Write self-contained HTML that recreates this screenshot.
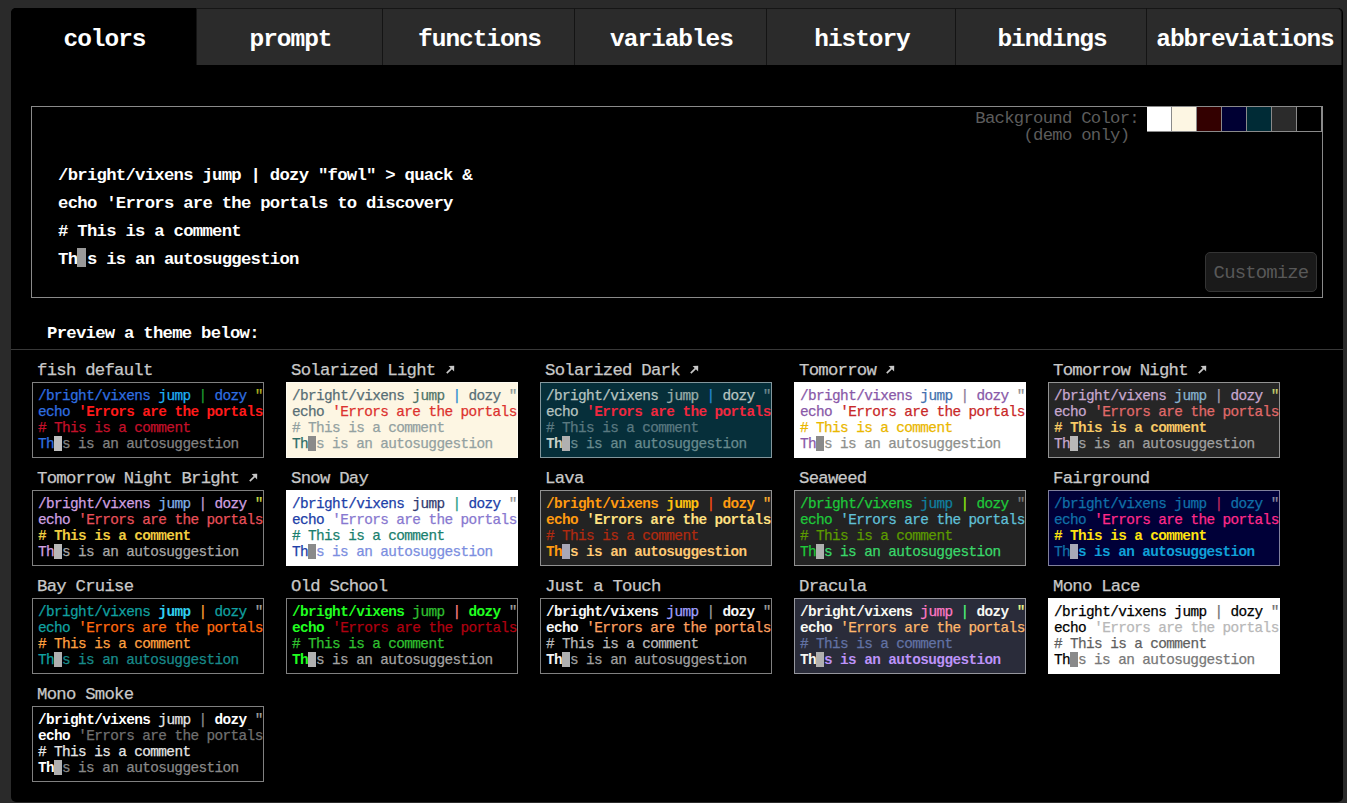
<!DOCTYPE html>
<html><head><meta charset="utf-8"><style>
html,body{margin:0;padding:0;width:1347px;height:803px;overflow:hidden;background:#2a2a2a;}
body{font-family:"Liberation Mono",monospace;color:#fff;position:relative;}
.panel{position:absolute;left:11px;top:8px;width:1332px;height:794px;background:#000;border-radius:5px;}
.tab{position:absolute;top:8px;height:57px;box-sizing:border-box;background:#2b2b2b;border-left:1px solid #141414;border-top:1px solid #161616;
  font-size:24.48px;letter-spacing:-1.043px;font-weight:bold;line-height:57px;text-align:center;color:#fff;padding-top:2px;padding-left:2px;}
.tab.sel{background:#000;border-left:none;border-top:none;padding-top:3px;padding-left:2px;border-top-left-radius:5px;}
.tab.last{border-top-right-radius:5px;border-right:1px solid #141414;}
.demo{position:absolute;left:31px;top:106px;width:1292px;height:192px;box-sizing:border-box;border:1px solid #8a8a8a;}
.dline{position:absolute;left:58px;font-size:17.28px;letter-spacing:-0.736px;font-weight:bold;line-height:16px;white-space:pre;color:#fff;}
.dcur{position:absolute;left:77px;top:248px;width:9px;height:19px;background:#999;}
.bglabel{position:absolute;right:208px;top:110px;font-size:17.28px;letter-spacing:-0.736px;line-height:17px;color:#5c5c5c;text-align:right;white-space:pre;}
.sw{position:absolute;top:106px;width:25px;height:26px;box-sizing:border-box;border:1px solid #8a8a8a;border-left:none;}
.btn{position:absolute;left:1205px;top:252px;width:112px;height:40px;box-sizing:border-box;border:1px solid #343434;border-radius:5px;background:#1a1a1a;
  color:#585858;font-size:18.90px;letter-spacing:-0.805px;line-height:40px;text-align:center;}
.preview{position:absolute;left:47px;top:326px;font-size:17.28px;letter-spacing:-0.736px;font-weight:bold;line-height:16px;color:#fff;white-space:pre;}
.hr{position:absolute;left:11px;top:349px;width:1332px;height:1px;background:#383838;}
.tname{-webkit-text-stroke:0.25px currentColor;position:absolute;font-size:17.28px;letter-spacing:-0.736px;line-height:16px;color:#c8c8c8;white-space:pre;}
.arr{position:absolute;}
.tbox{position:absolute;width:232px;height:76px;box-sizing:border-box;border:1px solid rgba(255,255,255,0.5);padding:5px 0 0 5px;
  font-size:14.40px;letter-spacing:-0.613px;line-height:16px;white-space:pre;overflow:hidden;}
.cur{display:inline-block;width:8px;height:15px;vertical-align:top;}
</style></head><body>
<div class="panel"></div>
<div class="tab sel" style="left:11px;width:185px">colors</div><div class="tab" style="left:196px;width:186px">prompt</div><div class="tab" style="left:382px;width:192px">functions</div><div class="tab" style="left:574px;width:192px">variables</div><div class="tab" style="left:766px;width:189px">history</div><div class="tab" style="left:955px;width:191px">bindings</div><div class="tab last" style="left:1146px;width:196px">abbreviations</div>
<div class="demo"></div>
<div class="dline" style="top:168px">/bright/vixens jump | dozy "fowl" &gt; quack &amp;</div>
<div class="dline" style="top:196px">echo 'Errors are the portals to discovery</div>
<div class="dline" style="top:224px"># This is a comment</div>
<div class="dline" style="top:252px">Th s is an autosuggestion</div>
<div class="dcur"></div>
<div class="bglabel">Background Color:
(demo only) </div>
<div class="sw" style="left:1147px;background:#ffffff"></div><div class="sw" style="left:1172px;background:#fdf6e3"></div><div class="sw" style="left:1197px;background:#330000"></div><div class="sw" style="left:1222px;background:#000033"></div><div class="sw" style="left:1247px;background:#002b36"></div><div class="sw" style="left:1272px;background:#2b2b2b"></div><div class="sw" style="left:1297px;background:#000000"></div>
<div class="btn">Customize</div>
<div class="preview">Preview a theme below:</div>
<div class="hr"></div>
<div class="tname" style="left:37px;top:363px">fish default</div><div class="tbox" style="left:32px;top:382px;background:#000000"><span style="color:#2f6fe0;-webkit-text-stroke:0.25px currentColor;">/bright/vixens</span> <span style="color:#1fb0f5;-webkit-text-stroke:0.25px currentColor;">jump</span> <span style="color:#1f9f2f;-webkit-text-stroke:0.25px currentColor;">|</span> <span style="color:#2f6fe0;-webkit-text-stroke:0.25px currentColor;">dozy</span> <span style="color:#b3b320;-webkit-text-stroke:0.25px currentColor;">&quot;fowl&quot;</span> <span style="color:#1fb0f5;-webkit-text-stroke:0.25px currentColor;">&gt; quack</span> <span style="color:#1f9f2f;-webkit-text-stroke:0.25px currentColor;">&amp;</span><br><span style="color:#2f6fe0;-webkit-text-stroke:0.25px currentColor;">echo</span> <span style="color:#ff1a1a;font-weight:bold;">'Errors are the portals to discovery</span><br><span style="color:#c4102a;-webkit-text-stroke:0.25px currentColor;"># This is a comment</span><br><span style="color:#2f6fe0;-webkit-text-stroke:0.25px currentColor;">Th</span><span class="cur" style="background:#c0c0c0"></span><span style="color:#828282;-webkit-text-stroke:0.25px currentColor;">s is an autosuggestion</span></div><div class="tname" style="left:291px;top:363px">Solarized Light</div><svg class="arr" style="left:445.6px;top:364.5px" width="9" height="9" viewBox="0 0 9 9"><path d="M0.8 8.2 L5.6 3.4" stroke="#c8c8c8" stroke-width="1.7" fill="none"/><path d="M2.6 0.9 L8.2 0.8 L8.1 6.4 Z" fill="#c8c8c8"/></svg><div class="tbox" style="left:286px;top:382px;background:#fdf6e3"><span style="color:#586e75;-webkit-text-stroke:0.25px currentColor;">/bright/vixens</span> <span style="color:#4f7468;-webkit-text-stroke:0.25px currentColor;">jump</span> <span style="color:#268bd2;-webkit-text-stroke:0.25px currentColor;">|</span> <span style="color:#586e75;-webkit-text-stroke:0.25px currentColor;">dozy</span> <span style="color:#8a9a9a;-webkit-text-stroke:0.25px currentColor;">&quot;fowl&quot;</span> <span style="color:#4f7468;-webkit-text-stroke:0.25px currentColor;">&gt; quack</span> <span style="color:#268bd2;-webkit-text-stroke:0.25px currentColor;">&amp;</span><br><span style="color:#586e75;-webkit-text-stroke:0.25px currentColor;">echo</span> <span style="color:#dc322f;-webkit-text-stroke:0.25px currentColor;">'Errors are the portals to discovery</span><br><span style="color:#93a1a1;-webkit-text-stroke:0.25px currentColor;"># This is a comment</span><br><span style="color:#2f6e68;-webkit-text-stroke:0.25px currentColor;">Th</span><span class="cur" style="background:#8a8a8a"></span><span style="color:#93a1a1;-webkit-text-stroke:0.25px currentColor;">s is an autosuggestion</span></div><div class="tname" style="left:545px;top:363px">Solarized Dark</div><svg class="arr" style="left:690.0px;top:364.5px" width="9" height="9" viewBox="0 0 9 9"><path d="M0.8 8.2 L5.6 3.4" stroke="#c8c8c8" stroke-width="1.7" fill="none"/><path d="M2.6 0.9 L8.2 0.8 L8.1 6.4 Z" fill="#c8c8c8"/></svg><div class="tbox" style="left:540px;top:382px;background:#062f3a"><span style="color:#b8c4c0;-webkit-text-stroke:0.25px currentColor;">/bright/vixens</span> <span style="color:#9aaca8;-webkit-text-stroke:0.25px currentColor;">jump</span> <span style="color:#268bd2;-webkit-text-stroke:0.25px currentColor;">|</span> <span style="color:#b8c4c0;-webkit-text-stroke:0.25px currentColor;">dozy</span> <span style="color:#6f8990;-webkit-text-stroke:0.25px currentColor;">&quot;fowl&quot;</span> <span style="color:#9aaca8;-webkit-text-stroke:0.25px currentColor;">&gt; quack</span> <span style="color:#268bd2;-webkit-text-stroke:0.25px currentColor;">&amp;</span><br><span style="color:#b8c4c0;-webkit-text-stroke:0.25px currentColor;">echo</span> <span style="color:#f0283f;font-weight:bold;">'Errors are the portals to discovery</span><br><span style="color:#5a7880;-webkit-text-stroke:0.25px currentColor;"># This is a comment</span><br><span style="color:#c8d0c8;font-weight:bold;">Th</span><span class="cur" style="background:#b0b0b0"></span><span style="color:#688a8e;-webkit-text-stroke:0.25px currentColor;">s is an autosuggestion</span></div><div class="tname" style="left:799px;top:363px">Tomorrow</div><svg class="arr" style="left:886.2px;top:364.5px" width="9" height="9" viewBox="0 0 9 9"><path d="M0.8 8.2 L5.6 3.4" stroke="#c8c8c8" stroke-width="1.7" fill="none"/><path d="M2.6 0.9 L8.2 0.8 L8.1 6.4 Z" fill="#c8c8c8"/></svg><div class="tbox" style="left:794px;top:382px;background:#ffffff"><span style="color:#8959a8;-webkit-text-stroke:0.25px currentColor;">/bright/vixens</span> <span style="color:#4271ae;-webkit-text-stroke:0.25px currentColor;">jump</span> <span style="color:#8a7a98;-webkit-text-stroke:0.25px currentColor;">|</span> <span style="color:#8959a8;-webkit-text-stroke:0.25px currentColor;">dozy</span> <span style="color:#909090;-webkit-text-stroke:0.25px currentColor;">&quot;fowl&quot;</span> <span style="color:#4271ae;-webkit-text-stroke:0.25px currentColor;">&gt; quack</span> <span style="color:#8a7a98;-webkit-text-stroke:0.25px currentColor;">&amp;</span><br><span style="color:#8959a8;-webkit-text-stroke:0.25px currentColor;">echo</span> <span style="color:#c82829;-webkit-text-stroke:0.25px currentColor;">'Errors are the portals to discovery</span><br><span style="color:#eab700;-webkit-text-stroke:0.25px currentColor;"># This is a comment</span><br><span style="color:#8959a8;-webkit-text-stroke:0.25px currentColor;">Th</span><span class="cur" style="background:#8a8a8a"></span><span style="color:#8e908c;-webkit-text-stroke:0.25px currentColor;">s is an autosuggestion</span></div><div class="tname" style="left:1053px;top:363px">Tomorrow Night</div><svg class="arr" style="left:1198.0px;top:364.5px" width="9" height="9" viewBox="0 0 9 9"><path d="M0.8 8.2 L5.6 3.4" stroke="#c8c8c8" stroke-width="1.7" fill="none"/><path d="M2.6 0.9 L8.2 0.8 L8.1 6.4 Z" fill="#c8c8c8"/></svg><div class="tbox" style="left:1048px;top:382px;background:#262626"><span style="color:#c8a8cf;-webkit-text-stroke:0.25px currentColor;">/bright/vixens</span> <span style="color:#88b4d0;-webkit-text-stroke:0.25px currentColor;">jump</span> <span style="color:#a8a0b0;-webkit-text-stroke:0.25px currentColor;">|</span> <span style="color:#c8a8cf;-webkit-text-stroke:0.25px currentColor;">dozy</span> <span style="color:#c8d070;-webkit-text-stroke:0.25px currentColor;">&quot;fowl&quot;</span> <span style="color:#88b4d0;-webkit-text-stroke:0.25px currentColor;">&gt; quack</span> <span style="color:#a8a0b0;-webkit-text-stroke:0.25px currentColor;">&amp;</span><br><span style="color:#c8a8cf;-webkit-text-stroke:0.25px currentColor;">echo</span> <span style="color:#e06a6a;-webkit-text-stroke:0.25px currentColor;">'Errors are the portals to discovery</span><br><span style="color:#f5c864;font-weight:bold;"># This is a comment</span><br><span style="color:#c8a8cf;-webkit-text-stroke:0.25px currentColor;">Th</span><span class="cur" style="background:#b8b8b8"></span><span style="color:#a0a0a0;-webkit-text-stroke:0.25px currentColor;">s is an autosuggestion</span></div><div class="tname" style="left:37px;top:471px">Tomorrow Night Bright</div><svg class="arr" style="left:249.4px;top:472.5px" width="9" height="9" viewBox="0 0 9 9"><path d="M0.8 8.2 L5.6 3.4" stroke="#c8c8c8" stroke-width="1.7" fill="none"/><path d="M2.6 0.9 L8.2 0.8 L8.1 6.4 Z" fill="#c8c8c8"/></svg><div class="tbox" style="left:32px;top:490px;background:#000000"><span style="color:#d0a0e0;-webkit-text-stroke:0.25px currentColor;">/bright/vixens</span> <span style="color:#80b0e8;-webkit-text-stroke:0.25px currentColor;">jump</span> <span style="color:#c0a0d8;-webkit-text-stroke:0.25px currentColor;">|</span> <span style="color:#d0a0e0;-webkit-text-stroke:0.25px currentColor;">dozy</span> <span style="color:#c8d848;-webkit-text-stroke:0.25px currentColor;">&quot;fowl&quot;</span> <span style="color:#80b0e8;-webkit-text-stroke:0.25px currentColor;">&gt; quack</span> <span style="color:#c0a0d8;-webkit-text-stroke:0.25px currentColor;">&amp;</span><br><span style="color:#d0a0e0;-webkit-text-stroke:0.25px currentColor;">echo</span> <span style="color:#e8505a;-webkit-text-stroke:0.25px currentColor;">'Errors are the portals to discovery</span><br><span style="color:#f0cc40;font-weight:bold;"># This is a comment</span><br><span style="color:#d0a0e0;-webkit-text-stroke:0.25px currentColor;">Th</span><span class="cur" style="background:#b8b8b8"></span><span style="color:#a8a8a8;-webkit-text-stroke:0.25px currentColor;">s is an autosuggestion</span></div><div class="tname" style="left:291px;top:471px">Snow Day</div><div class="tbox" style="left:286px;top:490px;background:#ffffff"><span style="color:#2040a8;-webkit-text-stroke:0.25px currentColor;">/bright/vixens</span> <span style="color:#303a70;-webkit-text-stroke:0.25px currentColor;">jump</span> <span style="color:#199a86;-webkit-text-stroke:0.25px currentColor;">|</span> <span style="color:#2040a8;-webkit-text-stroke:0.25px currentColor;">dozy</span> <span style="color:#909090;-webkit-text-stroke:0.25px currentColor;">&quot;fowl&quot;</span> <span style="color:#303a70;-webkit-text-stroke:0.25px currentColor;">&gt; quack</span> <span style="color:#199a86;-webkit-text-stroke:0.25px currentColor;">&amp;</span><br><span style="color:#2040a8;-webkit-text-stroke:0.25px currentColor;">echo</span> <span style="color:#8878d0;-webkit-text-stroke:0.25px currentColor;">'Errors are the portals to discovery</span><br><span style="color:#1a7f6e;-webkit-text-stroke:0.25px currentColor;"># This is a comment</span><br><span style="color:#2040a8;-webkit-text-stroke:0.25px currentColor;">Th</span><span class="cur" style="background:#8a8a8a"></span><span style="color:#7b8ee0;-webkit-text-stroke:0.25px currentColor;">s is an autosuggestion</span></div><div class="tname" style="left:545px;top:471px">Lava</div><div class="tbox" style="left:540px;top:490px;background:#232323"><span style="color:#ff9a10;font-weight:bold;">/bright/vixens</span> <span style="color:#ffc010;font-weight:bold;">jump</span> <span style="color:#ff5010;-webkit-text-stroke:0.25px currentColor;">|</span> <span style="color:#ff9a10;font-weight:bold;">dozy</span> <span style="color:#ffb030;-webkit-text-stroke:0.25px currentColor;">&quot;fowl&quot;</span> <span style="color:#ffc010;font-weight:bold;">&gt; quack</span> <span style="color:#ff5010;-webkit-text-stroke:0.25px currentColor;">&amp;</span><br><span style="color:#ff9a10;font-weight:bold;">echo</span> <span style="color:#ffe080;font-weight:bold;">'Errors are the portals to discovery</span><br><span style="color:#b02a10;-webkit-text-stroke:0.25px currentColor;"># This is a comment</span><br><span style="color:#ff9a10;font-weight:bold;">Th</span><span class="cur" style="background:#a8a8b8"></span><span style="color:#ffc873;font-weight:bold;">s is an autosuggestion</span></div><div class="tname" style="left:799px;top:471px">Seaweed</div><div class="tbox" style="left:794px;top:490px;background:#232323"><span style="color:#1ec83a;-webkit-text-stroke:0.25px currentColor;">/bright/vixens</span> <span style="color:#1080a0;-webkit-text-stroke:0.25px currentColor;">jump</span> <span style="color:#90ee10;-webkit-text-stroke:0.25px currentColor;">|</span> <span style="color:#1ec83a;-webkit-text-stroke:0.25px currentColor;">dozy</span> <span style="color:#7a7a7a;-webkit-text-stroke:0.25px currentColor;">&quot;fowl&quot;</span> <span style="color:#1080a0;-webkit-text-stroke:0.25px currentColor;">&gt; quack</span> <span style="color:#90ee10;-webkit-text-stroke:0.25px currentColor;">&amp;</span><br><span style="color:#1ec83a;-webkit-text-stroke:0.25px currentColor;">echo</span> <span style="color:#60c0d8;-webkit-text-stroke:0.25px currentColor;">'Errors are the portals to discovery</span><br><span style="color:#5c9a00;-webkit-text-stroke:0.25px currentColor;"># This is a comment</span><br><span style="color:#1ec83a;-webkit-text-stroke:0.25px currentColor;">Th</span><span class="cur" style="background:#b0b0b0"></span><span style="color:#3ad86a;-webkit-text-stroke:0.25px currentColor;">s is an autosuggestion</span></div><div class="tname" style="left:1053px;top:471px">Fairground</div><div class="tbox" style="left:1048px;top:490px;background:#000038"><span style="color:#1070a8;-webkit-text-stroke:0.25px currentColor;">/bright/vixens</span> <span style="color:#1070a8;-webkit-text-stroke:0.25px currentColor;">jump</span> <span style="color:#c02a60;-webkit-text-stroke:0.25px currentColor;">|</span> <span style="color:#1070a8;-webkit-text-stroke:0.25px currentColor;">dozy</span> <span style="color:#8a8aa0;-webkit-text-stroke:0.25px currentColor;">&quot;fowl&quot;</span> <span style="color:#1070a8;-webkit-text-stroke:0.25px currentColor;">&gt; quack</span> <span style="color:#c02a60;-webkit-text-stroke:0.25px currentColor;">&amp;</span><br><span style="color:#1070a8;-webkit-text-stroke:0.25px currentColor;">echo</span> <span style="color:#ff2a8a;-webkit-text-stroke:0.25px currentColor;">'Errors are the portals to discovery</span><br><span style="color:#ffe410;font-weight:bold;"># This is a comment</span><br><span style="color:#1070a8;-webkit-text-stroke:0.25px currentColor;">Th</span><span class="cur" style="background:#a8a8b8"></span><span style="color:#10a0d8;font-weight:bold;">s is an autosuggestion</span></div><div class="tname" style="left:37px;top:579px">Bay Cruise</div><div class="tbox" style="left:32px;top:598px;background:#000000"><span style="color:#10a0a0;-webkit-text-stroke:0.25px currentColor;">/bright/vixens</span> <span style="color:#30d0f0;font-weight:bold;">jump</span> <span style="color:#ffa030;-webkit-text-stroke:0.25px currentColor;">|</span> <span style="color:#10a0a0;-webkit-text-stroke:0.25px currentColor;">dozy</span> <span style="color:#a0a0a0;-webkit-text-stroke:0.25px currentColor;">&quot;fowl&quot;</span> <span style="color:#30d0f0;font-weight:bold;">&gt; quack</span> <span style="color:#ffa030;-webkit-text-stroke:0.25px currentColor;">&amp;</span><br><span style="color:#10a0a0;-webkit-text-stroke:0.25px currentColor;">echo</span> <span style="color:#ff6a10;-webkit-text-stroke:0.25px currentColor;">'Errors are the portals to discovery</span><br><span style="color:#ffa040;-webkit-text-stroke:0.25px currentColor;"># This is a comment</span><br><span style="color:#10a0a0;-webkit-text-stroke:0.25px currentColor;">Th</span><span class="cur" style="background:#b0b0b0"></span><span style="color:#188a8a;-webkit-text-stroke:0.25px currentColor;">s is an autosuggestion</span></div><div class="tname" style="left:291px;top:579px">Old School</div><div class="tbox" style="left:286px;top:598px;background:#000000"><span style="color:#20ff20;font-weight:bold;">/bright/vixens</span> <span style="color:#30c030;-webkit-text-stroke:0.25px currentColor;">jump</span> <span style="color:#ff8080;-webkit-text-stroke:0.25px currentColor;">|</span> <span style="color:#20ff20;font-weight:bold;">dozy</span> <span style="color:#a0a0a0;-webkit-text-stroke:0.25px currentColor;">&quot;fowl&quot;</span> <span style="color:#30c030;-webkit-text-stroke:0.25px currentColor;">&gt; quack</span> <span style="color:#ff8080;-webkit-text-stroke:0.25px currentColor;">&amp;</span><br><span style="color:#20ff20;font-weight:bold;">echo</span> <span style="color:#b00010;-webkit-text-stroke:0.25px currentColor;">'Errors are the portals to discovery</span><br><span style="color:#30c030;-webkit-text-stroke:0.25px currentColor;"># This is a comment</span><br><span style="color:#20ff20;font-weight:bold;">Th</span><span class="cur" style="background:#b0b0b0"></span><span style="color:#a3a3a3;-webkit-text-stroke:0.25px currentColor;">s is an autosuggestion</span></div><div class="tname" style="left:545px;top:579px">Just a Touch</div><div class="tbox" style="left:540px;top:598px;background:#000000"><span style="color:#f5f5f5;font-weight:bold;">/bright/vixens</span> <span style="color:#a0a0ff;-webkit-text-stroke:0.25px currentColor;">jump</span> <span style="color:#a0a0a0;-webkit-text-stroke:0.25px currentColor;">|</span> <span style="color:#f5f5f5;font-weight:bold;">dozy</span> <span style="color:#a0a0a0;-webkit-text-stroke:0.25px currentColor;">&quot;fowl&quot;</span> <span style="color:#a0a0ff;-webkit-text-stroke:0.25px currentColor;">&gt; quack</span> <span style="color:#a0a0a0;-webkit-text-stroke:0.25px currentColor;">&amp;</span><br><span style="color:#f5f5f5;font-weight:bold;">echo</span> <span style="color:#ffa060;-webkit-text-stroke:0.25px currentColor;">'Errors are the portals to discovery</span><br><span style="color:#b8b8b8;-webkit-text-stroke:0.25px currentColor;"># This is a comment</span><br><span style="color:#f5f5f5;font-weight:bold;">Th</span><span class="cur" style="background:#b0b0b0"></span><span style="color:#a0a0a0;-webkit-text-stroke:0.25px currentColor;">s is an autosuggestion</span></div><div class="tname" style="left:799px;top:579px">Dracula</div><div class="tbox" style="left:794px;top:598px;background:#2a2c3a"><span style="color:#f8f8f2;font-weight:bold;">/bright/vixens</span> <span style="color:#ff79c6;-webkit-text-stroke:0.25px currentColor;">jump</span> <span style="color:#50fa7b;-webkit-text-stroke:0.25px currentColor;">|</span> <span style="color:#f8f8f2;font-weight:bold;">dozy</span> <span style="color:#f1fa8c;-webkit-text-stroke:0.25px currentColor;">&quot;fowl&quot;</span> <span style="color:#ff79c6;-webkit-text-stroke:0.25px currentColor;">&gt; quack</span> <span style="color:#50fa7b;-webkit-text-stroke:0.25px currentColor;">&amp;</span><br><span style="color:#f8f8f2;font-weight:bold;">echo</span> <span style="color:#ffb86c;-webkit-text-stroke:0.25px currentColor;">'Errors are the portals to discovery</span><br><span style="color:#6272a4;-webkit-text-stroke:0.25px currentColor;"># This is a comment</span><br><span style="color:#f8f8f2;font-weight:bold;">Th</span><span class="cur" style="background:#b0b0b0"></span><span style="color:#bd93f9;font-weight:bold;">s is an autosuggestion</span></div><div class="tname" style="left:1053px;top:579px">Mono Lace</div><div class="tbox" style="left:1048px;top:598px;background:#ffffff"><span style="color:#000000;-webkit-text-stroke:0.25px currentColor;">/bright/vixens</span> <span style="color:#000000;-webkit-text-stroke:0.25px currentColor;">jump</span> <span style="color:#707070;-webkit-text-stroke:0.25px currentColor;">|</span> <span style="color:#000000;-webkit-text-stroke:0.25px currentColor;">dozy</span> <span style="color:#707070;-webkit-text-stroke:0.25px currentColor;">&quot;fowl&quot;</span> <span style="color:#000000;-webkit-text-stroke:0.25px currentColor;">&gt; quack</span> <span style="color:#707070;-webkit-text-stroke:0.25px currentColor;">&amp;</span><br><span style="color:#000000;-webkit-text-stroke:0.25px currentColor;">echo</span> <span style="color:#b8b8b8;-webkit-text-stroke:0.25px currentColor;">'Errors are the portals to discovery</span><br><span style="color:#5f5f5f;-webkit-text-stroke:0.25px currentColor;"># This is a comment</span><br><span style="color:#000000;-webkit-text-stroke:0.25px currentColor;">Th</span><span class="cur" style="background:#8a8a8a"></span><span style="color:#787878;-webkit-text-stroke:0.25px currentColor;">s is an autosuggestion</span></div><div class="tname" style="left:37px;top:687px">Mono Smoke</div><div class="tbox" style="left:32px;top:706px;background:#000000"><span style="color:#ffffff;font-weight:bold;">/bright/vixens</span> <span style="color:#e6e6e6;-webkit-text-stroke:0.25px currentColor;">jump</span> <span style="color:#909090;-webkit-text-stroke:0.25px currentColor;">|</span> <span style="color:#ffffff;font-weight:bold;">dozy</span> <span style="color:#a0a0a0;-webkit-text-stroke:0.25px currentColor;">&quot;fowl&quot;</span> <span style="color:#e6e6e6;-webkit-text-stroke:0.25px currentColor;">&gt; quack</span> <span style="color:#909090;-webkit-text-stroke:0.25px currentColor;">&amp;</span><br><span style="color:#ffffff;font-weight:bold;">echo</span> <span style="color:#707070;-webkit-text-stroke:0.25px currentColor;">'Errors are the portals to discovery</span><br><span style="color:#e6e6e6;-webkit-text-stroke:0.25px currentColor;"># This is a comment</span><br><span style="color:#ffffff;font-weight:bold;">Th</span><span class="cur" style="background:#b0b0b0"></span><span style="color:#888888;-webkit-text-stroke:0.25px currentColor;">s is an autosuggestion</span></div>
</body></html>
